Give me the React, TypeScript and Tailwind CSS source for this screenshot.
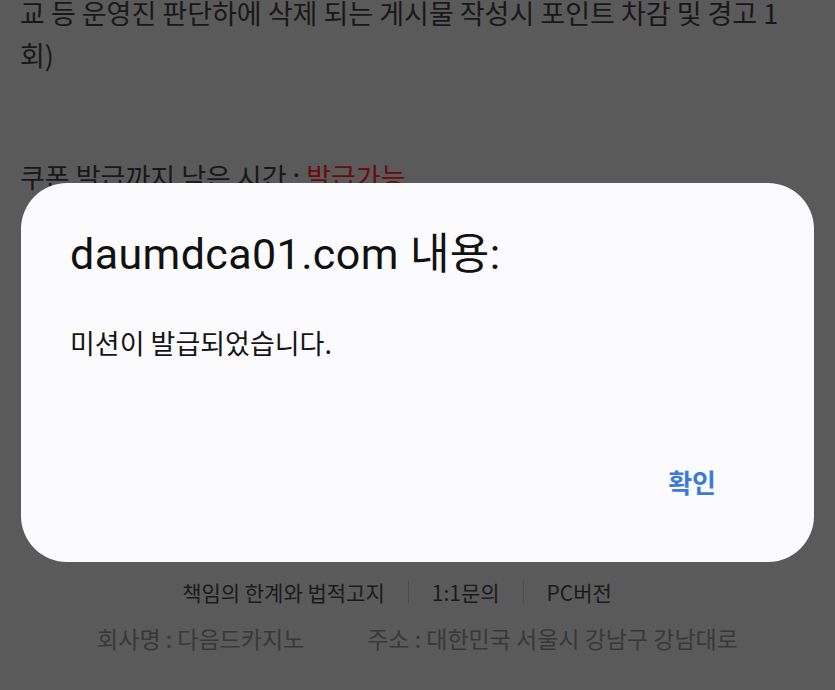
import React from "react"

const bodyFont = "font-['Noto_Sans_CJK_KR','Noto_Sans',sans-serif]"

const AlertDialog = ({ host, message, onConfirm }: { host: string; message: string; onConfirm?: () => void }) => {
  return (
    <div className="absolute inset-0 px-[21px] pt-[183px]">
      <div className="flex h-[379px] flex-col rounded-[46px] bg-[#fbfbfd] pl-[49px] pr-[98px]">
        <h2 className="mt-[46px] font-['Roboto','Noto_Sans_CJK_KR',sans-serif] text-[43px] leading-[50px] text-[#111] tracking-[0.4px]">
          {host} 내용:
        </h2>
        <p className="mt-[47px] text-[27px] leading-[34px] text-[#151515]">{message}</p>
        <div className="mt-auto mb-[63px] flex justify-end">
          <button
            onClick={onConfirm}
            className="text-[26px] font-bold leading-[34px] text-[#3b7ad8]"
          >
            확인
          </button>
        </div>
      </div>
    </div>
  )
}

export default function App() {
  return (
    <div className={`relative h-[690px] w-[835px] overflow-hidden bg-[#5a5a5a] ${bodyFont}`}>
      <div className="mt-[-8px] px-5 text-[27px] leading-[42px] text-[#181818]">
        <p>
          교 등 운영진 판단하에 삭제 되는 게시물 작성시 포인트 차감 및 경고 1
          <br />
          회)
        </p>
        <p className="mt-[80px]">
          쿠폰 발급까지 남은 시간 : <span className="text-[#6a0a0a]">발급가능</span>
        </p>
      </div>

      <footer className="mt-[379px] flex flex-col items-center">
        <div className="mr-[41px] flex items-center text-[21px] leading-[30px] text-[#1a1a1a]">
          <span>책임의 한계와 법적고지</span>
          <span className="mx-[23px] h-[22px] w-px bg-[#4c4c4c]" />
          <span>1:1문의</span>
          <span className="mx-[23px] h-[22px] w-px bg-[#4c4c4c]" />
          <span>PC버전</span>
        </div>
        <div className="mt-[16px] flex gap-[63px] text-[23px] leading-[30px] text-[#383838]">
          <span>회사명 : 다음드카지노</span>
          <span>주소 : 대한민국 서울시 강남구 강남대로</span>
        </div>
      </footer>

      <AlertDialog host="daumdca01.com" message="미션이 발급되었습니다." />
    </div>
  )
}
